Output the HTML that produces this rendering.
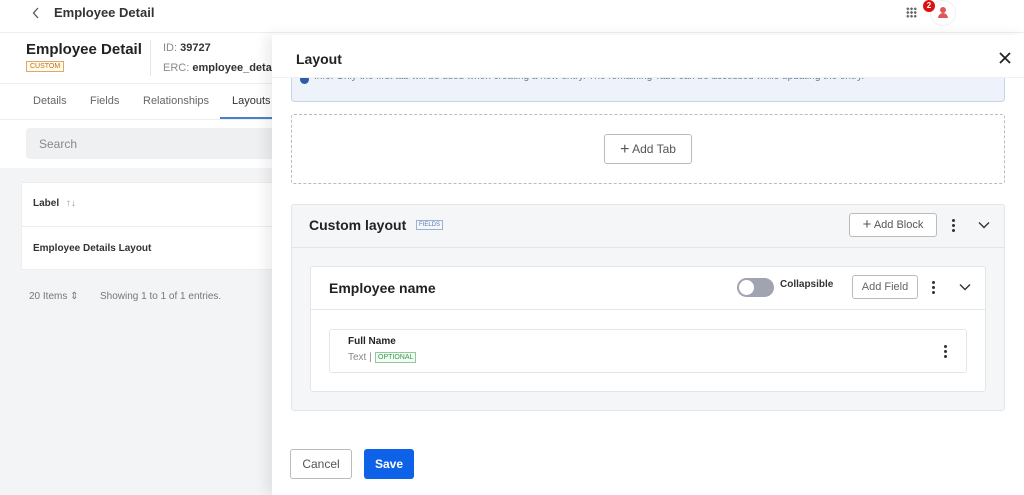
<!DOCTYPE html>
<html><head><meta charset="utf-8"><style>
*{box-sizing:border-box;margin:0;padding:0}
body{width:1024px;height:495px;overflow:hidden;font-family:"Liberation Sans",sans-serif;background:#fff;position:relative;color:#222}
.abs{position:absolute}
.b{font-weight:bold}
.dots{position:absolute;width:3px}
.dots i{display:block;width:3px;height:3px;background:#333;border-radius:50%;margin-bottom:2px}
</style></head><body>
<!-- left page -->
<div class="abs" style="left:0;top:0;width:1024px;height:33px;border-bottom:1px solid #eee"></div>
<svg class="abs" style="left:32px;top:7px" width="8" height="12" viewBox="0 0 8 12"><path d="M6 1L1.5 6L6 11" fill="none" stroke="#555" stroke-width="1.3"/></svg>
<div class="abs b" style="left:54px;top:5px;font-size:13px;color:#333">Employee Detail</div>
<div class="abs" style="left:906px;top:7px;width:11px;height:11px;background:radial-gradient(circle,#666 1.2px,transparent 1.4px) 0 0/3.7px 3.7px"></div>
<div class="abs" style="left:930px;top:0;width:26px;height:26px;border-radius:50%;border:1px solid #f0f0f0;background:#fff"></div>
<div class="abs" style="left:940px;top:7px;width:6px;height:6px;border-radius:50%;background:#e05555"></div>
<div class="abs" style="left:938px;top:13px;width:10px;height:5px;border-radius:5px 5px 0 0;background:#e05555"></div>
<div class="abs" style="left:923px;top:0;width:12px;height:12px;border-radius:50%;background:#d11;color:#fff;font-size:8px;text-align:center;line-height:12px;font-weight:bold">2</div>

<div class="abs b" style="left:26px;top:41px;font-size:15px;color:#222">Employee Detail</div>
<div class="abs" style="left:26px;top:61px;font-size:7px;color:#b8741a;border:1px solid #e0a860;padding:1px 3px;background:#fff8ee">CUSTOM</div>
<div class="abs" style="left:150px;top:40px;width:1px;height:36px;background:#e5e5e5"></div>
<div class="abs" style="left:163px;top:42px;font-size:11px;color:#888">ID: <b style="color:#333">39727</b></div>
<div class="abs" style="left:163px;top:62px;font-size:11px;color:#888">ERC: <b style="color:#333">employee_details</b></div>
<div class="abs" style="left:0;top:83px;width:272px;height:1px;background:#eee"></div>
<div class="abs" style="left:33px;top:95px;font-size:11px;color:#666">Details</div>
<div class="abs" style="left:90px;top:95px;font-size:11px;color:#666">Fields</div>
<div class="abs" style="left:143px;top:95px;font-size:11px;color:#666">Relationships</div>
<div class="abs" style="left:232px;top:95px;font-size:11px;color:#333">Layouts</div>
<div class="abs" style="left:220px;top:117px;width:52px;height:2px;background:#4a80c8"></div>
<div class="abs" style="left:0;top:119px;width:272px;height:1px;background:#eee"></div>
<div class="abs" style="left:26px;top:128px;width:250px;height:31px;background:#eef0f2;border-radius:4px"></div>
<div class="abs" style="left:39px;top:137px;font-size:12px;color:#888">Search</div>
<div class="abs" style="left:0;top:168px;width:272px;height:327px;background:#f3f4f6"></div>
<div class="abs" style="left:21px;top:182px;width:260px;height:88px;background:#fff;border:1px solid #eceef0"></div>
<div class="abs" style="left:21px;top:226px;width:260px;height:1px;background:#eceef0"></div>
<div class="abs b" style="left:33px;top:198px;font-size:10px;color:#333">Label <span style="color:#999;font-weight:normal;margin-left:4px">↑↓</span></div>
<div class="abs b" style="left:33px;top:243px;font-size:10px;color:#333">Employee Details Layout</div>
<div class="abs" style="left:29px;top:291px;font-size:10px;color:#777">20 Items ⇕</div>
<div class="abs" style="left:100px;top:291px;font-size:10px;color:#777">Showing 1 to 1 of 1 entries.</div>

<!-- modal -->
<div class="abs" style="left:272px;top:35px;width:752px;height:460px;background:#fff;box-shadow:-6px 0 12px rgba(0,0,0,.08)"></div>
<div class="abs" style="left:291px;top:78px;width:714px;height:24px;background:#eef3fb;border:1px solid #c6d4ea;border-top:none;border-radius:0 0 4px 4px;overflow:hidden">
<div style="position:absolute;left:8px;top:-3px;width:9px;height:9px;border-radius:50%;background:#2d5ca8"></div>
<div style="position:absolute;left:22px;top:-7px;font-size:10px;color:#6a7a98;white-space:nowrap">Info: Only the first tab will be used when creating a new entry. The remaining Tabs can be accessed while updating the entry.</div></div>
<div class="abs" style="left:272px;top:35px;width:752px;height:43px;background:#fff;border-bottom:1px solid #f0f0f0"></div>
<div class="abs b" style="left:296px;top:51px;font-size:14px;color:#222">Layout</div>
<svg class="abs" style="left:999px;top:52px" width="12" height="12" viewBox="0 0 12 12"><path d="M1 1L11 11M11 1L1 11" stroke="#222" stroke-width="1.8"/></svg>

<div class="abs" style="left:291px;top:114px;width:714px;height:70px;border:1px dashed #bbb;border-radius:3px"></div>
<div class="abs" style="left:604px;top:134px;width:88px;height:30px;border:1px solid #bbb;border-radius:3px;font-size:12px;color:#555;text-align:center;line-height:28px"><span style="font-size:16px;vertical-align:-1px">+</span> Add Tab</div>

<div class="abs" style="left:291px;top:204px;width:714px;height:207px;background:#f5f6f7;border:1px solid #e3e5e7;border-radius:3px"></div>
<div class="abs" style="left:291px;top:247px;width:714px;height:1px;background:#e3e5e7"></div>
<div class="abs b" style="left:309px;top:217px;font-size:14px;color:#222">Custom layout</div>
<div class="abs" style="left:416px;top:220px;font-size:6px;color:#5a7bb0;border:1px solid #9ab0d4;padding:1px 2px">FIELDS</div>
<div class="abs" style="left:849px;top:213px;width:88px;height:24px;border:1px solid #bbb;border-radius:3px;background:#fff;font-size:11px;color:#555;text-align:center;line-height:22px"><span style="font-size:15px;vertical-align:-1px">+</span> Add Block</div>
<div class="dots" style="left:952px;top:219px"><i></i><i></i><i></i></div>
<svg class="abs" style="left:978px;top:221px" width="12" height="8" viewBox="0 0 12 8"><path d="M1 1.5L6 6.5L11 1.5" fill="none" stroke="#333" stroke-width="1.4"/></svg>

<div class="abs" style="left:310px;top:266px;width:676px;height:126px;background:#fff;border:1px solid #e3e5e7;border-radius:3px"></div>
<div class="abs" style="left:310px;top:309px;width:676px;height:1px;background:#e3e5e7"></div>
<div class="abs b" style="left:329px;top:280px;font-size:14px;color:#222">Employee name</div>
<div class="abs" style="left:737px;top:278px;width:37px;height:19px;border-radius:10px;background:#a0a4b0"></div>
<div class="abs" style="left:739px;top:280px;width:15px;height:15px;border-radius:50%;background:#fff"></div>
<div class="abs b" style="left:780px;top:279px;font-size:10px;color:#333">Collapsible</div>
<div class="abs" style="left:852px;top:275px;width:66px;height:24px;border:1px solid #bbb;border-radius:3px;font-size:11px;color:#666;text-align:center;line-height:22px">Add Field</div>
<div class="dots" style="left:932px;top:281px"><i></i><i></i><i></i></div>
<svg class="abs" style="left:959px;top:283px" width="12" height="8" viewBox="0 0 12 8"><path d="M1 1.5L6 6.5L11 1.5" fill="none" stroke="#333" stroke-width="1.4"/></svg>

<div class="abs" style="left:329px;top:329px;width:638px;height:44px;border:1px solid #e3e5e7;border-radius:3px"></div>
<div class="abs b" style="left:348px;top:336px;font-size:10px;color:#222">Full Name</div>
<div class="abs" style="left:348px;top:352px;font-size:10px;color:#888">Text |</div>
<div class="abs" style="left:375px;top:352px;font-size:7px;color:#3a9a50;border:1px solid #8ccc9a;padding:1px 2px;background:#f3fbf4">OPTIONAL</div>
<div class="dots" style="left:944px;top:345px"><i></i><i></i><i></i></div>

<div class="abs" style="left:290px;top:449px;width:62px;height:30px;border:1px solid #bbb;border-radius:3px;font-size:12px;color:#555;text-align:center;line-height:28px">Cancel</div>
<div class="abs b" style="left:364px;top:449px;width:50px;height:30px;background:#0d62e8;border-radius:3px;font-size:12px;color:#fff;text-align:center;line-height:30px">Save</div>
</body></html>
